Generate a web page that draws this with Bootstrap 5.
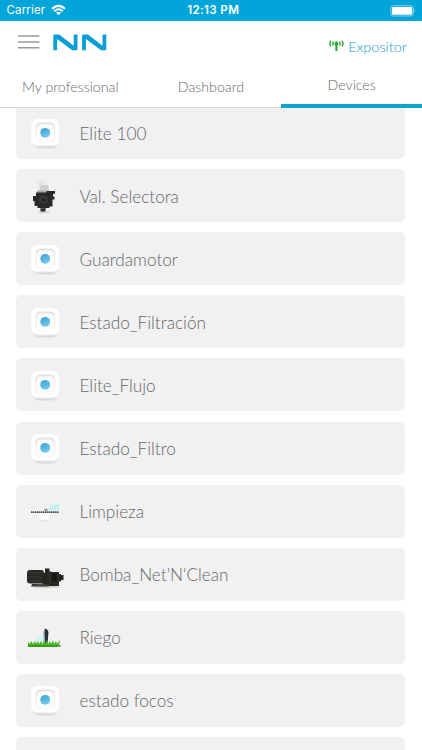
<!DOCTYPE html>
<html lang="en">
<head>
<meta charset="utf-8">
<meta name="viewport" content="width=device-width, initial-scale=1">
<title>Devices</title>
<link href="https://cdn.jsdelivr.net/npm/bootstrap@5.3.0/dist/css/bootstrap.min.css" rel="stylesheet">
<style>
html,body{height:100%;overflow:hidden}
body{font-family:Lato,sans-serif;font-weight:300;color:#66676a;background:#fff}
svg{display:block;flex:none}
.status{height:20.5px;background:#02a5d9;color:#fff;font:400 11.6px/21px Inter,sans-serif;padding:1px 5px 0 6.5px}
.status>*{flex:1 1 0}
.clock{font-weight:600;letter-spacing:.35px;padding-left:3px}
.carrier{letter-spacing:.1px}
.brandbar{height:46px;padding:0 15px 0 18px}
.brand{margin-top:-3px}
.site{font-size:14.5px;line-height:20px;color:#35a9d3;padding-top:7px}
.site span{-webkit-text-stroke:.1px #35a9d3}
.tabs{height:41px;border-bottom:1px solid #d2d2d2;font-size:14.2px}
.tabs .nav-link{color:#66676a;padding:0;height:41px;line-height:40px}
.tabs .nav-link.active{line-height:36px;border-bottom:4px solid #0ba4cb}
.devices{padding:0 17px 0 16.3px;margin-top:-1.5px;gap:10.12px}
.device{height:53px;flex:none;background:#f1f1f1;border-radius:5px;font-size:17.2px;line-height:24px;padding-left:7.7px}
.device span{margin:2px 0 0 5.5px}
</style>
<script src="https://cdn.jsdelivr.net/npm/bootstrap@5.3.0/dist/js/bootstrap.bundle.min.js"></script>
</head>
<body class="d-flex flex-column">
<svg width="0" height="0" class="position-absolute" aria-hidden="true">
<defs>
<linearGradient id="blue" x1="0" y1="0" x2=".4" y2="1"><stop stop-color="#3a9fd2"/><stop offset="1" stop-color="#70c9ee"/></linearGradient>
<linearGradient id="well" x2="0" y2="1"><stop stop-color="#e2e2e2"/><stop offset=".5" stop-color="#f2f2f2"/><stop offset="1" stop-color="#f6f6f6"/></linearGradient>
<linearGradient id="edge" x2="0" y2="1"><stop offset=".75" stop-color="#fff"/><stop offset="1" stop-color="#dedede"/></linearGradient>
<filter id="soft" x="-30%" y="-30%" width="160%" height="160%"><feGaussianBlur stdDeviation=".6"/></filter>
<symbol id="sensor" viewBox="0 0 50 50">
<rect x="8.500" y="12.500" width="25.500" height="28" rx="6" fill="#c5c5c5" opacity=".5" filter="url(#soft)"/>
<rect x="7.300" y="11.300" width="27.600" height="28" rx="5.500" fill="url(#edge)"/>
<rect x="7.500" y="11.300" width="27.200" height="26.200" rx="5.500" fill="#fff"/>
<rect x="11.300" y="14.500" width="20" height="20" rx="5" fill="url(#well)"/>
<rect x="12.700" y="16.500" width="17.200" height="17.400" rx="4.500" fill="#fcfcfc"/>
<circle cx="21.200" cy="24.800" r="4.900" fill="url(#blue)"/>
</symbol>
</defs>
</svg>
<div class="status d-flex align-items-center flex-shrink-0">
<div class="d-flex align-items-center carrier">Carrier
<svg width="17" height="13" viewBox="0 0 17 13" fill="none" stroke="#fff" stroke-width="2" style="margin-left:5px"><path d="M2 4.700Q8.500-1 15 4.700M4.200 7.200Q8.500 3.300 12.800 7.200"/><path d="M8.500 11.200 5.900 8.600Q8.500 6.700 11.100 8.600Z" fill="#fff" stroke="none"/></svg></div>
<div class="clock text-center text-nowrap">12:13 PM</div>
<div class="d-flex justify-content-end"><svg width="27" height="12" viewBox="0 0 27 12"><rect x=".8" y=".8" width="22.600" height="10.200" rx="2.500" fill="none" stroke="#8bd5ec"/><rect x="2" y="2" width="20.200" height="7.800" rx="1.300" fill="#fff"/><path d="M24.700 4q1.500 1.900 0 3.800Z" fill="#8bd5ec"/></svg></div>
</div>
<header class="brandbar d-flex align-items-center justify-content-between flex-shrink-0">
<div class="brand d-flex align-items-center">
<svg width="22" height="14" viewBox="0 0 22 14" stroke="#9b9a9b" stroke-width="1.600"><path d="M0 1h21.300M0 7h21.300M0 12.800h21.300"/></svg>
<svg width="54" height="17" viewBox="0 0 54 17" fill="#0c9ed9" style="margin-left:13px"><path id="n" d="M.3 16.300V1.500Q.3.500 1.300.500H6.200L20.700 11.700V.5H24.500V15.300Q24.500 16.300 23.500 16.300H19.200L4.100 5V16.300Z"/><use href="#n" x="28.800"/></svg>
</div>
<div class="site d-flex align-items-center">
<svg width="15" height="12" viewBox="0 0 15 12" fill="none" stroke="#26a22b" stroke-width="1.500" style="margin:-3px 4px 0 0"><path d="M7.400 4V11" stroke-width="2"/><circle cx="7.400" cy="3.500" r="1.900" fill="#26a22b" stroke="none"/><path d="M4.400 1.500Q3.200 3.500 4.400 5.500M2 .6Q-.5 3.500 2 6.400M10.400 1.500Q11.600 3.500 10.400 5.500M12.800.6Q15.300 3.500 12.800 6.400" stroke-width="1.350"/></svg>
<span>Expositor</span></div>
</header>
<nav class="tabs nav nav-fill flex-shrink-0 row g-0">
<a class="nav-link col-4" href="#">My professional</a><a class="nav-link col-4" href="#">Dashboard</a><a class="nav-link active col-4" href="#">Devices</a>
</nav>
<main class="flex-grow-1 overflow-hidden">
<div class="devices d-flex flex-column">
<div class="device d-flex align-items-center"><svg width="50" height="50"><use href="#sensor"/></svg><span>Elite 100</span></div>
<div class="device d-flex align-items-center"><svg width="50" height="50" viewBox="0 0 50 50"><ellipse cx="20" cy="41.300" rx="7" ry="1.300" fill="#d7d7d7"/><path d="M12 13 18 8l6 5-4 2Z" fill="#e8e8e8"/><path d="M15.500 14h9v8h-9z" fill="#cfcfcf"/><path d="M13 19.500h12v3H13z" fill="#aaa"/><path d="M12 21.500h10l1-1.500h8v2.500l-2 .7v2.300h1.500v3h-2v7h-3v1.500h-4v3.500h-5V37h-3v-2h-3v-5h-1.500v-5H12Z" fill="#292929"/><circle cx="19.500" cy="28.500" r="4.500" fill="#353535"/><circle cx="19.700" cy="29" r="1.200" fill="#111"/><path d="M17 37.500h5" stroke="#555"/></svg><span>Val. Selectora</span></div>
<div class="device d-flex align-items-center"><svg width="50" height="50"><use href="#sensor"/></svg><span>Guardamotor</span></div>
<div class="device d-flex align-items-center"><svg width="50" height="50"><use href="#sensor"/></svg><span>Estado_Filtración</span></div>
<div class="device d-flex align-items-center"><svg width="50" height="50"><use href="#sensor"/></svg><span>Elite_Flujo</span></div>
<div class="device d-flex align-items-center"><svg width="50" height="50"><use href="#sensor"/></svg><span>Estado_Filtro</span></div>
<div class="device d-flex align-items-center"><svg width="50" height="50" viewBox="0 0 50 50"><path d="m22 24.500 6-5 7-2.500.5 7.500Z" fill="#cff3f4"/><path d="m24 23.500 10-5M27 23.500l8-2" stroke="#b3eaee" stroke-dasharray="1 1"/><path d="M16.500 26.500h8v8q-4 1.500-8 0Z" fill="#fff"/><path d="M16.500 34.500q4 1.500 8 0" fill="none" stroke="#d5d5d5"/><path d="M7 26.200h28" stroke="#777" stroke-width="1.200"/><path d="M7 26.200h28" stroke="#333" stroke-width="1.200" stroke-dasharray="1 1"/><path d="M20.500 22.700h3v2.500h-3z" fill="#999"/></svg><span>Limpieza</span></div>
<div class="device d-flex align-items-center"><svg width="50" height="50" viewBox="0 0 50 50"><ellipse cx="22" cy="38" rx="14" ry="1.200" fill="#d8d3cc"/><rect x="3" y="21" width="17" height="13.500" rx="3" fill="#282825"/><path d="M18 24h3v-4.500h4.500v3H27V23h8v2h2v1h2.500v5H37v1.500h-2V37H21v-2h-3Z" fill="#252522"/><path d="M8 35h17v2.500H7Z" fill="#393936"/><path d="M4 24h15M4 28h14M5 32h13M26 24v11M34 25v9" stroke="#3c3c38" stroke-width=".8"/><path d="M28 25h5v7h-5z" fill="#171715"/><path d="M13 35h6" stroke="#777"/></svg><span>Bomba_Net'N'Clean</span></div>
<div class="device d-flex align-items-center"><svg width="50" height="50" viewBox="0 0 50 50"><path d="M8 31q5-8 14-10v10Z" fill="#d5f4f3"/><path d="M19 20q2-3 4-1v13h-4Z" fill="#b5c5c9"/><path d="M20.500 16.500q3.500.5 4 4l-1 11h-2.500Z" fill="#263137"/><path d="m4 35 0-5 2 2 1-3 2 3 2-3 1 3 2-3 1 3 2-3 1 3 2-3 1 3 2-4 1 4 2-3 1 3 2-4 1 4 2-3 1 3 3-4-1 6-2 1Z" fill="#47b51f"/><path d="M4.500 34h33" stroke="#38871e" stroke-width="1.700" stroke-dasharray="2 1"/></svg><span>Riego</span></div>
<div class="device d-flex align-items-center"><svg width="50" height="50"><use href="#sensor"/></svg><span>estado focos</span></div>
<div class="device d-flex align-items-center"><svg width="50" height="50"><use href="#sensor"/></svg></div>
</div>
</main>
</body>
</html>
